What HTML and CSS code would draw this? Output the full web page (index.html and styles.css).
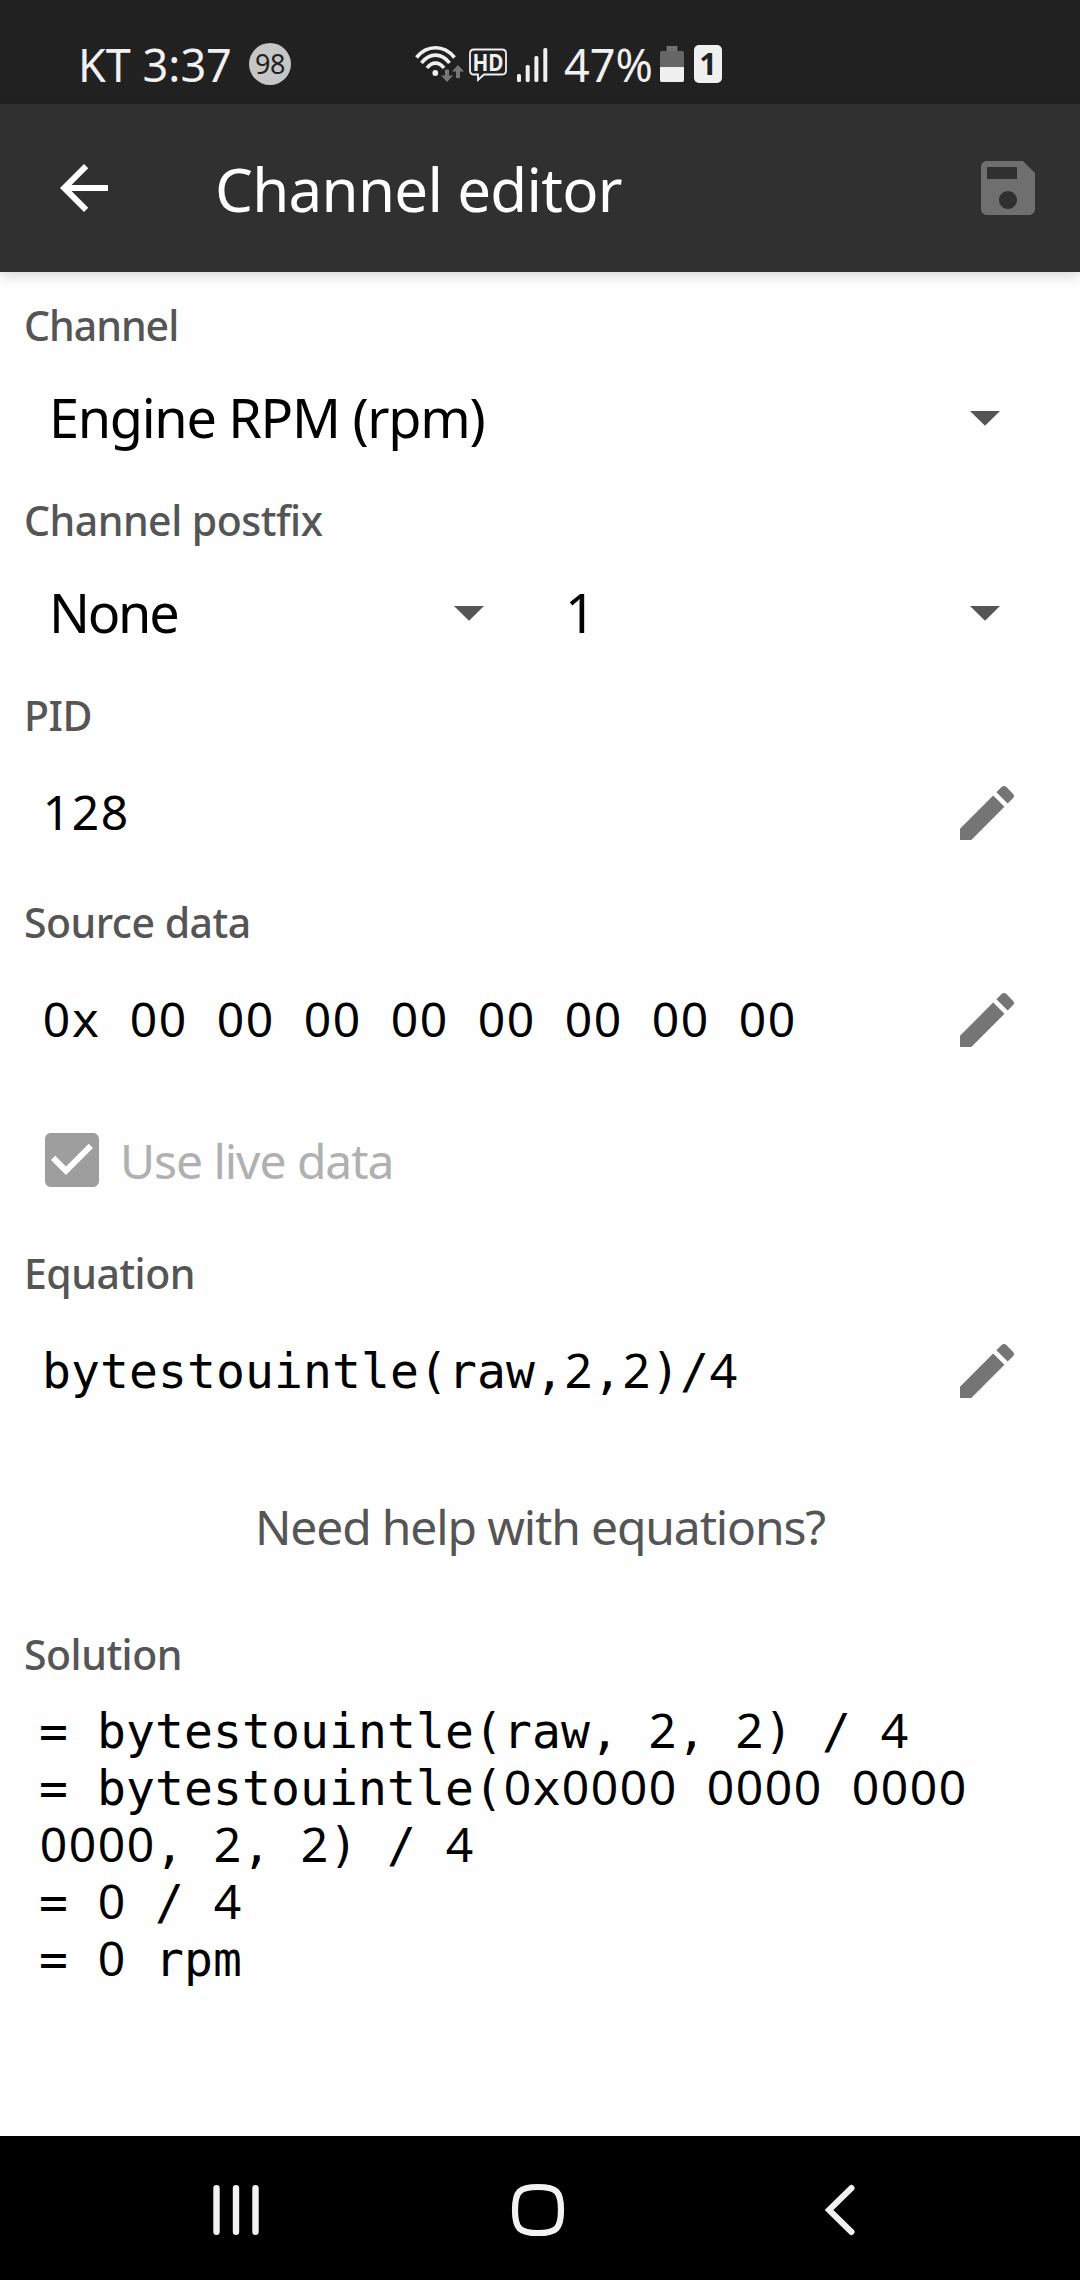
FILE: index.html
```html
<!DOCTYPE html>
<html lang="en">
<head>
    <meta charset="UTF-8">
    <meta name="viewport" content="width=device-width, initial-scale=1.0">
    <title>Channel editor</title>
    <link rel="stylesheet" href="styles.css">
</head>
<body>
    <div class="screen">
        <div class="status-bar">
            <div class="carrier">KT 3:37</div>
            <div class="badge">98</div>
            <div class="status-icons">
                <svg class="wifi" width="49" height="40" viewBox="0 0 49 40">
                    <g fill="none" stroke="#f0f0f0" stroke-width="3.6">
                        <path d="M1.5 12.5C12 -0.5 29 -0.5 39.5 12.5"/>
                        <path d="M6.5 18C14.500 7.500 26.500 7.500 34.500 18"/>
                        <path d="M12 23C17 16.500 24 16.500 29 23"/>
                    </g>
                    <circle cx="20.300" cy="28" r="2.900" fill="#f0f0f0"/>
                    <path fill="#777" d="M30 24.500h4v6h4l-6 6.500-6-6.500h4zM41 33v-6.500h-4l6-6.500 6 6.500h-4v6.500z"/>
                </svg>
                <svg class="hd" width="38" height="40" viewBox="0 0 38 40">
                    <path fill="none" stroke="#f0f0f0" stroke-width="1.800" d="M5 4.500h28q4 0 4 4v17q0 4-4 4H15l-6 5.500v-5.500H5q-4 0-4-4v-17q0-4 4-4z"/>
                    <text x="3.500" y="26" textLength="31" lengthAdjust="spacingAndGlyphs">HD</text>
                </svg>
                <svg class="signal" width="31" height="40" viewBox="0 0 31 40">
                    <g fill="#f0f0f0">
                        <rect x="0" y="29" width="4" height="8" rx="1.500"/>
                        <rect x="8.700" y="20" width="4" height="17" rx="1.500"/>
                        <rect x="17.400" y="11" width="4" height="26" rx="1.500"/>
                        <rect x="26.300" y="3" width="4" height="34" rx="1.500"/>
                    </g>
                </svg>
                <div class="percent">47%</div>
                <svg class="battery" width="24" height="40" viewBox="0 0 24 40">
                    <path fill="#707070" d="M6.500 1h11v5h-11z"/>
                    <rect x="0" y="6" width="24" height="31" rx="2" fill="#666"/>
                    <path fill="#f0f0f0" d="M0 22h24v13q0 2-2 2H2q-2 0-2-2z"/>
                </svg>
                <div class="sim">1</div>
            </div>
        </div>

        <div class="app-bar">
            <svg class="icon" viewBox="0 0 24 24"><path fill="#fff" d="M20 11H7.830l5.590-5.590L12 4l-8 8 8 8 1.410-1.410L7.830 13H20v-2z"/></svg>
            <h1 class="title">Channel editor</h1>
            <svg class="icon" viewBox="0 0 24 24"><path fill="#6f6f6f" d="M17 3H5c-1.110 0-2 .9-2 2v14c0 1.100.89 2 2 2h14c1.100 0 2-.9 2-2V7l-4-4zm-5 16c-1.660 0-3-1.340-3-3s1.340-3 3-3 3 1.340 3 3-1.340 3-3 3zm3-10H5V5h10v4z"/></svg>
        </div>

        <div class="content">
            <div class="label tight">Channel</div>
            <div class="select-row">
                <div class="select wide">
                    <span>Engine RPM (rpm)</span>
                    <svg class="icon" viewBox="0 0 24 24"><path fill="#555" d="M7 10l5 4.900 5-4.900z"/></svg>
                </div>
            </div>

            <div class="label">Channel postfix</div>
            <div class="select-row">
                <div class="select">
                    <span class="tight">None</span>
                    <svg class="icon" viewBox="0 0 24 24"><path fill="#555" d="M7 10l5 4.900 5-4.900z"/></svg>
                </div>
                <div class="select">
                    <span>1</span>
                    <svg class="icon" viewBox="0 0 24 24"><path fill="#555" d="M7 10l5 4.900 5-4.900z"/></svg>
                </div>
            </div>

            <div class="label">PID</div>
            <div class="edit-row">
                <div class="mono"><span class="num">128</span></div>
                <svg class="icon" viewBox="0 0 24 24"><path fill="#757575" d="M3 17.250V21h3.750L17.810 9.940l-3.750-3.750L3 17.250zM20.710 7.040c.39-.39.39-1.020 0-1.410l-2.340-2.340c-.39-.39-1.020-.39-1.410 0l-1.830 1.830 3.750 3.750 1.830-1.830z"/></svg>
            </div>

            <div class="label">Source data</div>
            <div class="edit-row">
                <div class="mono"><span class="num">0</span>x <span class="num">00</span> <span class="num">00</span> <span class="num">00</span> <span class="num">00</span> <span class="num">00</span> <span class="num">00</span> <span class="num">00</span> <span class="num">00</span></div>
                <svg class="icon" viewBox="0 0 24 24"><path fill="#757575" d="M3 17.250V21h3.750L17.810 9.940l-3.750-3.750L3 17.250zM20.710 7.040c.39-.39.39-1.020 0-1.410l-2.340-2.340c-.39-.39-1.020-.39-1.410 0l-1.830 1.830 3.750 3.750 1.830-1.830z"/></svg>
            </div>
            <div class="check-row">
                <svg class="icon" viewBox="0 0 24 24"><path fill="#9e9e9e" d="M19 3H5c-1.110 0-2 .9-2 2v14c0 1.100.89 2 2 2h14c1.110 0 2-.9 2-2V5c0-1.100-.89-2-2-2zm-9 14l-5-5 1.410-1.410L10 14.170l7.590-7.590L19 8l-9 9z"/></svg>
                <span>Use live data</span>
            </div>

            <div class="label">Equation</div>
            <div class="edit-row">
                <div class="mono">bytestouintle(raw,<span class="num">2</span>,<span class="num">2</span>)/<span class="num">4</span></div>
                <svg class="icon" viewBox="0 0 24 24"><path fill="#757575" d="M3 17.250V21h3.750L17.810 9.940l-3.750-3.750L3 17.250zM20.710 7.040c.39-.39.39-1.020 0-1.410l-2.340-2.340c-.39-.39-1.020-.39-1.410 0l-1.830 1.830 3.750 3.750 1.830-1.830z"/></svg>
            </div>
            <div class="help">Need help with equations?</div>

            <div class="label">Solution</div>
            <div class="mono solution">
                <div>= bytestouintle(raw, <span class="num">2</span>, <span class="num">2</span>) / <span class="num">4</span></div>
                <div>= bytestouintle(<span class="num">0</span>x<span class="num">0000</span> <span class="num">0000</span> <span class="num">0000</span><br><span class="num">0000</span>, <span class="num">2</span>, <span class="num">2</span>) / <span class="num">4</span></div>
                <div>= <span class="num">0</span> / <span class="num">4</span></div>
                <div>= <span class="num">0</span> rpm</div>
            </div>
        </div>

        <div class="nav-bar">
            <svg width="48" height="54" viewBox="0 0 48 54">
                <path stroke="#f2f2f2" stroke-width="6.400" stroke-linecap="round" d="M4.500 5.200v43.600M24 5.200v43.600M43.500 5.200v43.600"/>
            </svg>
            <svg class="home" width="54" height="54" viewBox="0 0 54 54">
                <path fill="none" stroke="#f2f2f2" stroke-width="6.200" d="M27 4C45.500 4 50 8.500 50 27S45.500 50 27 50 4 45.500 4 27 8.500 4 27 4z"/>
            </svg>
            <svg class="back" width="34" height="54" viewBox="0 0 34 54">
                <path fill="none" stroke="#f2f2f2" stroke-width="6" stroke-linecap="round" d="M28.500 5L6 27l22.500 22"/>
            </svg>
        </div>
    </div>
</body>
</html>
```
FILE: styles.css
```css
* {
    margin: 0;
    padding: 0;
    box-sizing: border-box;
}

body {
    font-family: "Noto Sans", sans-serif;
    background-color: #fefefe;
}

svg {
    display: block;
    flex-shrink: 0;
}

.screen {
    display: flex;
    flex-direction: column;
    width: 1080px;
    height: 2280px;
    overflow: hidden;
}

.icon {
    width: 72px;
    height: 72px;
}

/* status bar */
.status-bar {
    display: flex;
    align-items: center;
    height: 104px;
    padding: 25px 0 0 78px;
    background-color: #212121;
    color: #f0f0f0;
    font-size: 45px;
    line-height: 54px;
    white-space: nowrap;
}

.carrier {
    width: 171px;
}

.badge {
    width: 42px;
    height: 42px;
    margin-top: -2px;
    border-radius: 50%;
    background-color: #c6c6c6;
    color: #212121;
    font-size: 27px;
    line-height: 42px;
    letter-spacing: -0.5px;
    text-align: center;
}

.status-icons {
    display: flex;
    align-items: center;
    margin-left: 124px;
}

.hd {
    margin-left: 5px;
}

.hd text {
    font-size: 24px;
    font-weight: bold;
    fill: #f0f0f0;
}

.signal {
    margin-left: 10px;
}

.percent {
    width: 96px;
    margin-left: 16px;
}

.sim {
    width: 28px;
    height: 38px;
    margin: -2px 0 0 10px;
    border-radius: 5px;
    background-color: #f0f0f0;
    color: #212121;
    font-size: 31px;
    font-weight: bold;
    line-height: 37px;
    text-align: center;
}

/* app bar */
.app-bar {
    position: relative;
    display: flex;
    align-items: center;
    height: 168px;
    padding: 0 36px 0 48px;
    background-color: #303030;
    box-shadow: 0 3px 12px rgba(0, 0, 0, 0.17);
}

.title {
    flex: 1;
    margin-left: 95px;
    padding-top: 2px;
    color: #fff;
    font-size: 60px;
    font-weight: normal;
    letter-spacing: -0.7px;
}

/* form */
.content {
    flex: 1;
    padding: 25px 0 0 24px;
}

.label {
    height: 56px;
    color: #555;
    font-size: 41px;
    font-weight: 500;
    line-height: 57px;
    letter-spacing: -0.5px;
}

.label.tight {
    letter-spacing: -1px;
}

.select-row {
    display: flex;
    height: 127px;
    margin-bottom: 12px;
}

.select {
    display: flex;
    align-items: center;
    justify-content: space-between;
    width: 516px;
    padding: 0 35px 0 25px;
    font-size: 54px;
    letter-spacing: -1.3px;
}

.select.wide {
    width: 1032px;
}

.select .tight {
    letter-spacing: -2.3px;
}

.edit-row {
    display: flex;
    align-items: center;
    justify-content: space-between;
    height: 139px;
    padding: 0 57px 0 18px;
    margin-bottom: 12px;
}

.mono {
    padding-top: 2px;
    font-family: "DejaVu Sans Mono", monospace;
    font-size: 48px;
    line-height: 57px;
    letter-spacing: 0.1px;
    white-space: nowrap;
}

/* digits with an open zero, spaced to the monospace advance */
.num {
    margin: 0 -0.75px 0 0.75px;
    font-family: "Noto Sans", sans-serif;
    line-height: 1;
    letter-spacing: 1.54px;
}

.check-row {
    display: flex;
    align-items: center;
    height: 142px;
    margin: -12px 0 14px;
    padding-left: 12px;
    color: #b0b0b0;
    font-size: 48px;
}

.check-row span {
    margin-left: 12px;
    padding-top: 1px;
    letter-spacing: -1.05px;
}

.help {
    height: 173px;
    margin: -12px 24px 13px 0;
    color: #555;
    font-size: 48px;
    line-height: 174px;
    letter-spacing: -1.15px;
    text-align: center;
}

.solution {
    margin-top: 19px;
    padding-left: 15px;
}

/* navigation bar */
.nav-bar {
    display: flex;
    align-items: center;
    height: 144px;
    padding: 4px 0 0 212px;
    background-color: #000;
}

.home {
    margin-left: 251px;
}

.back {
    margin-left: 258px;
}
```
